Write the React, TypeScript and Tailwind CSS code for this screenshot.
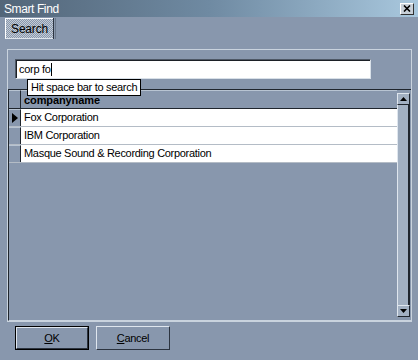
import React from 'react';

const rows = ['Fox Corporation', 'IBM Corporation', 'Masque Sound & Recording Corporation'];

const App = () => {
  return (
    <div
      className="relative w-[418px] h-[360px] bg-[#8897ad] flex flex-col overflow-hidden text-[11px] tracking-[-0.3px] text-black"
      style={{ fontFamily: '"Liberation Sans", Arial, sans-serif' }}
    >
      {/* Title bar */}
      <div className="h-[17px] flex items-center justify-between pl-[4px] pr-[4px] bg-gradient-to-r from-[#536679] via-[#6f8aa2] to-[#a9c8de]">
        <span className="text-white text-[12px] leading-none tracking-[-0.4px]">Smart Find</span>
        <div className="w-[14px] h-[12px] bg-[#c8d0d8] border-t border-l border-t-white border-l-white border-b border-r border-b-[#303030] border-r-[#303030] flex items-center justify-center">
          <svg width="8" height="7" viewBox="0 0 8 7">
            <path d="M1 0.5 L7 6.5 M7 0.5 L1 6.5" stroke="#000" strokeWidth="1.6" />
          </svg>
        </div>
      </div>

      {/* Tab */}
      <div className="h-[32px] pl-[5px] pt-[1px] flex">
        <div className="h-[21px] flex">
          <div className="w-[48px] h-[21px] border-t border-l border-t-white border-l-white border-b border-b-[#dfe6ee] bg-[repeating-conic-gradient(#c4ccd6_0_25%,#8897ad_0_50%)] bg-[length:2px_2px] flex items-center justify-center">
            <span className="text-[12px] leading-none tracking-[-0.2px] px-[1px]">Search</span>
          </div>
          <div className="w-[1px] h-[21px] bg-[#2c3440]" />
          <div className="w-[1px] ml-[1px] h-[21px] bg-[#6a788a]" />
        </div>
      </div>

      {/* Tab page */}
      <div className="ml-[7px] mr-[6px] h-[273px] border border-[#c9d3de] flex flex-col">
        <div className="pt-[9px] pl-[7px] h-[39px]">
          <div className="w-[356px] h-[20px] border-t border-l border-t-[#4e5866] border-l-[#4e5866] border-b border-r border-b-[#d8e0e8] border-r-[#d8e0e8]">
            <div className="w-full h-full bg-white border-t border-l border-t-[#1c2026] border-l-[#1c2026] flex items-center pl-[2px]">
              <span className="text-[11px] leading-none">corp fo</span>
              <span className="w-[1px] h-[13px] bg-black" />
            </div>
          </div>
        </div>

        {/* Grid */}
        <div className="flex-1 border-t border-l border-t-[#1f252d] border-l-[#1f252d] border-b border-b-[#c9d3de] flex">
          <div className="flex-1 flex flex-col">
            {/* header */}
            <div className="h-[19px] flex border-b border-b-[#1f252d]">
              <div className="w-[12px] border-r border-r-[#1f252d] border-t border-t-[#b8c4d2]" />
              <div className="flex-1 flex items-end pb-[2px] pl-[3px] border-t border-t-[#b8c4d2] font-bold text-[11px] leading-none tracking-[-0.1px]">companyname</div>
            </div>
            {rows.map((r, i) => (
              <div key={r} className="h-[18px] flex border-b border-b-[#b4bcc6]">
                <div className="w-[12px] bg-[#8897ad] border-r border-r-[#1f252d] border-t border-t-[#b8c4d2] flex items-center justify-center">
                  {i === 0 && (
                    <svg width="6" height="10" viewBox="0 0 6 10">
                      <path d="M0 0 L6 5 L0 10 Z" fill="#000" />
                    </svg>
                  )}
                </div>
                <div className="flex-1 bg-white flex items-center pl-[3px] text-[11px] whitespace-nowrap">{r}</div>
              </div>
            ))}
          </div>
          {/* scrollbar */}
          <div className="w-[13px] flex flex-col mr-[1px] mt-[3px] mb-[3px]">
            <div className="h-[12px] bg-[#a2b0c2] border-t border-l border-t-[#dfe6ee] border-l-[#dfe6ee] border-b border-r border-b-[#1f252d] border-r-[#1f252d] flex items-center justify-center">
              <svg width="7" height="4" viewBox="0 0 7 4">
                <path d="M0 4 L3.5 0 L7 4 Z" fill="#000" />
              </svg>
            </div>
            <div className="flex-1 bg-[#a2b0c2] border-l border-l-[#dfe6ee] border-r-2 border-r-[#1f252d]" />
            <div className="h-[12px] bg-[#a2b0c2] border-t border-l border-t-[#dfe6ee] border-l-[#dfe6ee] border-b border-r border-b-[#1f252d] border-r-[#1f252d] flex items-center justify-center">
              <svg width="7" height="4" viewBox="0 0 7 4">
                <path d="M0 0 L3.5 4 L7 0 Z" fill="#000" />
              </svg>
            </div>
          </div>
        </div>
      </div>

      {/* Buttons */}
      <div className="pt-[4px] pl-[15px] flex gap-[7px]">
        <div className="w-[74px] h-[24px] border border-black">
          <div className="w-full h-full border-t border-l border-t-[#dfe6ee] border-l-[#dfe6ee] border-b border-r border-b-[#2c3440] border-r-[#2c3440] flex items-center justify-center text-[11px]">
            <span><span className="underline">O</span>K</span>
          </div>
        </div>
        <div className="w-[74px] h-[24px] border-t border-l border-t-[#dfe6ee] border-l-[#dfe6ee] border-b border-r border-b-[#2c3440] border-r-[#2c3440] flex items-center justify-center text-[11px]">
          <span><span className="underline">C</span>ancel</span>
        </div>
      </div>

      {/* Tooltip */}
      <div className="absolute left-[27px] top-[79px] h-[17px] px-[3px] bg-white border border-black flex items-center text-[11px] leading-none whitespace-nowrap">
        Hit space bar to search
      </div>
    </div>
  );
};

export default App;
